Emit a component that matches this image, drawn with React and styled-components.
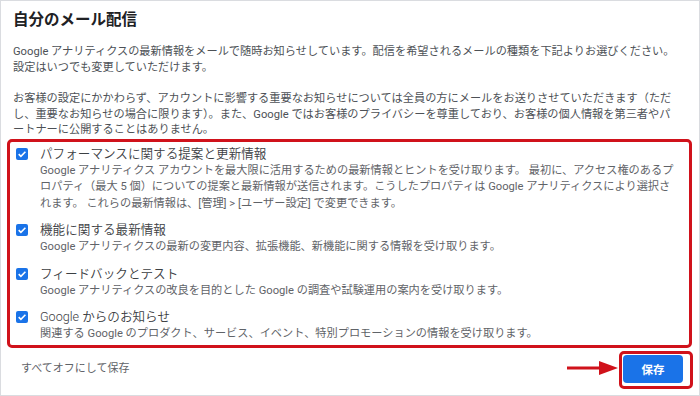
import React from "react";
import styled, { createGlobalStyle } from "styled-components";

const Global = createGlobalStyle`
  html, body { margin: 0; padding: 0; background: #fff; }
  body { font-family: Roboto, "Noto Sans CJK JP", sans-serif; }
`;

const Frame = styled.div`
  box-sizing: border-box;
  width: 700px;
  height: 396px;
  border: 1px solid #dadce0;
  padding-top: 9px;
  display: flex;
  flex-direction: column;
`;

const Title = styled.h2`
  margin: 0 0 0 12px;
  font-size: 15.5px;
  line-height: 20px;
  font-weight: 700;
  color: #202124;
`;

const Para = styled.p`
  margin: ${(p) => p.$top}px 12px 0 12px;
  font-size: 11.2px;
  line-height: 15.5px;
  color: #4d5156;
  white-space: nowrap;
`;

const Highlight = styled.div`
  box-sizing: border-box;
  width: 685px;
  margin: 1px 0 0 6px;
  border: 3px solid #d0121b;
  border-radius: 5px;
  padding: 3px 0 2px 6px;
  display: flex;
  flex-direction: column;
  gap: 9px;
`;

const Item = styled.div`
  display: flex;
  align-items: flex-start;
  gap: 12px;
`;

const Box = styled.span`
  flex: none;
  width: 12px;
  height: 12px;
  margin-top: 3px;
  display: block;
  svg { display: block; }
`;

const ItemBody = styled.div`
  display: flex;
  flex-direction: column;
`;

const ItemTitle = styled.div`
  font-size: 12.6px;
  line-height: 18px;
  font-weight: 350;
  color: #3c4043;
  white-space: nowrap;
`;

const ItemDesc = styled.div`
  font-size: 11.2px;
  line-height: 16.5px;
  color: #5f6368;
  white-space: nowrap;
`;

const Footer = styled.div`
  margin-top: 3px;
  padding: 0 6px 0 20px;
  display: flex;
  align-items: center;
`;

const OffLink = styled.span`
  font-size: 11px;
  color: #5f6368;
  margin-top: -5px;
`;

const Spacer = styled.div`
  flex: 1;
`;

const Arrow = styled.svg`
  display: block;
  margin-top: -3px;
`;

const ButtonHighlight = styled.div`
  border: 3px solid #d0121b;
  border-radius: 5px;
  padding: 1px 7px 3px 1px;
  display: flex;
`;

const SaveButton = styled.button`
  width: 60px;
  height: 28px;
  border: none;
  border-radius: 4px;
  background: #1a73e8;
  color: #fff;
  font-family: Roboto, "Noto Sans CJK JP", sans-serif;
  font-size: 11.5px;
  font-weight: 700;
  padding: 0;
  cursor: pointer;
`;

const Check = () => (
  <Box>
    <svg width="12" height="12" viewBox="0 0 12 12">
      <rect x="0" y="0" width="12" height="12" rx="2" fill="#1a73e8" />
      <path d="M2.7 6.1 L4.9 8.3 L9.4 3.7" fill="none" stroke="#fff" strokeWidth="1.6" />
    </svg>
  </Box>
);

const items = [
  {
    title: "パフォーマンスに関する提案と更新情報",
    lines: [
      "Google アナリティクス アカウントを最大限に活用するための最新情報とヒントを受け取ります。 最初に、アクセス権のあるプ",
      "ロパティ（最大 5 個）についての提案と最新情報が送信されます。こうしたプロパティは Google アナリティクスにより選択さ",
      "れます。 これらの最新情報は、[管理] > [ユーザー設定] で変更できます。",
    ],
  },
  {
    title: "機能に関する最新情報",
    lines: ["Google アナリティクスの最新の変更内容、拡張機能、新機能に関する情報を受け取ります。"],
  },
  {
    title: "フィードバックとテスト",
    lines: ["Google アナリティクスの改良を目的とした Google の調査や試験運用の案内を受け取ります。"],
  },
  {
    title: "Google からのお知らせ",
    lines: ["関連する Google のプロダクト、サービス、イベント、特別プロモーションの情報を受け取ります。"],
  },
];

export default function App() {
  return (
    <>
      <Global />
      <Frame>
        <Title>自分のメール配信</Title>
        <Para $top={14}>
          Google アナリティクスの最新情報をメールで随時お知らせしています。配信を希望されるメールの種類を下記よりお選びください。
          <br />
          設定はいつでも変更していただけます。
        </Para>
        <Para $top={16}>
          お客様の設定にかかわらず、アカウントに影響する重要なお知らせについては全員の方にメールをお送りさせていただきます（ただ
          <br />
          し、重要なお知らせの場合に限ります）。また、Google ではお客様のプライバシーを尊重しており、お客様の個人情報を第三者やパ
          <br />
          ートナーに公開することはありません。
        </Para>
        <Highlight>
          {items.map((it) => (
            <Item key={it.title}>
              <Check />
              <ItemBody>
                <ItemTitle>{it.title}</ItemTitle>
                {it.lines.map((l) => (
                  <ItemDesc key={l}>{l}</ItemDesc>
                ))}
              </ItemBody>
            </Item>
          ))}
        </Highlight>
        <Footer>
          <OffLink>すべてオフにして保存</OffLink>
          <Spacer />
          <Arrow width="52" height="16" viewBox="0 0 52 16">
            <line x1="0" y1="8" x2="36" y2="8" stroke="#d0121b" strokeWidth="3" />
            <polygon points="32,1 51,8 32,15" fill="#d0121b" />
          </Arrow>
          <ButtonHighlight>
            <SaveButton>保存</SaveButton>
          </ButtonHighlight>
        </Footer>
      </Frame>
    </>
  );
}
